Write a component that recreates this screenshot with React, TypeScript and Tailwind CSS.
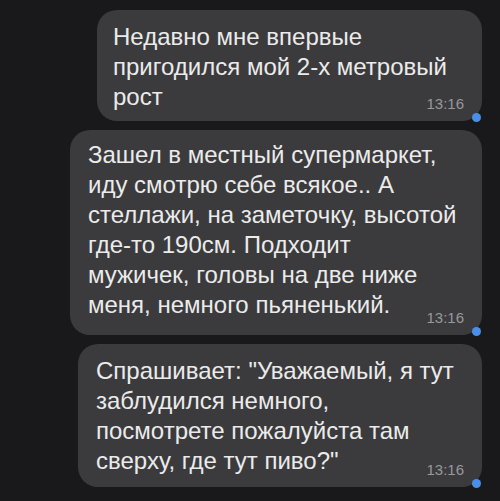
import React from 'react';

const Bubble: React.FC<{ lines: string[]; className: string; pad: string }> = ({ lines, className, pad }) => (
  <div className={`relative rounded-[20px] bg-[#3b3b3d] ${pad} ${className}`}>
    {lines.map((l, i) => (
      <div key={i} className="whitespace-nowrap text-[24px] leading-[30px] text-[#ebebeb]">
        {l}
      </div>
    ))}
    <span className="absolute bottom-[8px] right-[18px] text-[15px] leading-[18px] text-[#98989d]">13:16</span>
    <span className="absolute -bottom-[1px] right-[1px] h-[9px] w-[9px] rounded-full bg-[#4a8fe7]" />
  </div>
);

export default function App() {
  return (
    <div
      className="flex h-[501px] w-[500px] flex-col items-end gap-[9px] bg-[#19191b] pt-[10px] pr-[18px]"
      style={{ fontFamily: '"Liberation Sans", Arial, sans-serif' }}
    >
      <Bubble
        className="h-[111px] w-[385px]"
        pad="pl-[16px] pt-[12px]"
        lines={['Недавно мне впервые', 'пригодился мой 2-х метровый', 'рост']}
      />
      <Bubble
        className="h-[205px] w-[412px]"
        pad="pl-[18px] pt-[10px]"
        lines={[
          'Зашел в местный супермаркет,',
          'иду смотрю себе всякое.. А',
          'стеллажи, на заметочку, высотой',
          'где-то 190см. Подходит',
          'мужичек, головы на две ниже',
          'меня, немного пьяненький.',
        ]}
      />
      <Bubble
        className="h-[143px] w-[404px]"
        pad="pl-[18px] pt-[12px]"
        lines={[
          'Спрашивает: "Уважаемый, я тут',
          'заблудился немного,',
          'посмотрете пожалуйста там',
          'сверху, где тут пиво?"',
        ]}
      />
    </div>
  );
}
